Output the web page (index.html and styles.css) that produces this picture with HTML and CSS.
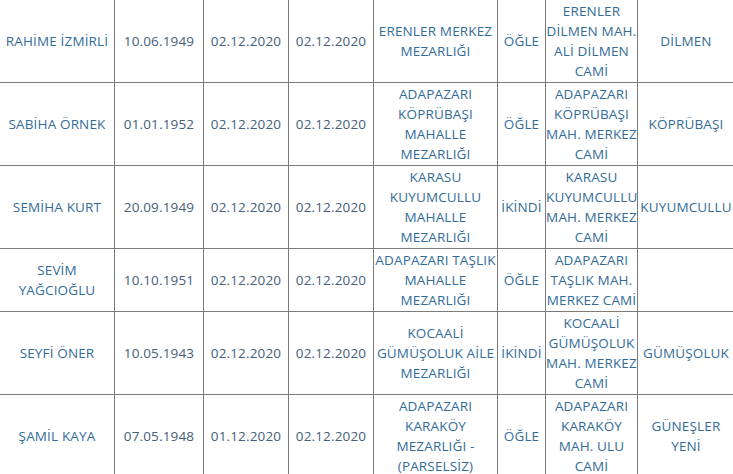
FILE: index.html
```html
<!DOCTYPE html>
<html lang="tr">
<head>
<meta charset="utf-8">
<link rel="stylesheet" href="styles.css">
</head>
<body>
<table class="list">
<colgroup>
<col class="c1"><col class="c2"><col class="c3"><col class="c4"><col class="c5"><col class="c6"><col class="c7"><col class="c8">
</colgroup>
<tbody>
<tr>
<td class="name">RAHİME İZMİRLİ</td><td class="date">10.06.1949</td><td class="date">02.12.2020</td><td class="date">02.12.2020</td>
<td>ERENLER MERKEZ MEZARLIĞI</td><td>ÖĞLE</td><td>ERENLER DİLMEN MAH. ALİ DİLMEN CAMİ</td><td>DİLMEN</td>
</tr>
<tr>
<td class="name">SABİHA ÖRNEK</td><td class="date">01.01.1952</td><td class="date">02.12.2020</td><td class="date">02.12.2020</td>
<td>ADAPAZARI KÖPRÜBAŞI MAHALLE MEZARLIĞI</td><td>ÖĞLE</td><td>ADAPAZARI KÖPRÜBAŞI MAH. MERKEZ CAMİ</td><td>KÖPRÜBAŞI</td>
</tr>
<tr>
<td class="name">SEMİHA KURT</td><td class="date">20.09.1949</td><td class="date">02.12.2020</td><td class="date">02.12.2020</td>
<td>KARASU KUYUMCULLU MAHALLE MEZARLIĞI</td><td>İKİNDİ</td><td>KARASU KUYUMCULLU MAH. MERKEZ CAMİ</td><td>KUYUMCULLU</td>
</tr>
<tr>
<td class="name">SEVİM YAĞCIOĞLU</td><td class="date">10.10.1951</td><td class="date">02.12.2020</td><td class="date">02.12.2020</td>
<td>ADAPAZARI TAŞLIK MAHALLE MEZARLIĞI</td><td>ÖĞLE</td><td>ADAPAZARI TAŞLIK MAH. MERKEZ CAMİ</td><td></td>
</tr>
<tr>
<td class="name">SEYFİ ÖNER</td><td class="date">10.05.1943</td><td class="date">02.12.2020</td><td class="date">02.12.2020</td>
<td>KOCAALİ GÜMÜŞOLUK AİLE MEZARLIĞI</td><td>İKİNDİ</td><td>KOCAALİ GÜMÜŞOLUK MAH. MERKEZ CAMİ</td><td>GÜMÜŞOLUK</td>
</tr>
<tr>
<td class="name">ŞAMİL KAYA</td><td class="date">07.05.1948</td><td class="date">01.12.2020</td><td class="date">02.12.2020</td>
<td>ADAPAZARI KARAKÖY MEZARLIĞI - (PARSELSİZ)</td><td>ÖĞLE</td><td>ADAPAZARI KARAKÖY MAH. ULU CAMİ</td><td>GÜNEŞLER YENİ</td>
</tr>
</tbody>
</table>
</body>
</html>
```
FILE: styles.css
```css
html, body {
  margin: 0;
  padding: 0;
  background: #ffffff;
  overflow: hidden;
}
.list {
  border-collapse: collapse;
  table-layout: fixed;
  width: 735px;
  margin: -1px 0 0 -1px;
  font-family: "Open Sans", "Liberation Sans", sans-serif;
  font-size: 13.5px;
  letter-spacing: 0.15px;
  line-height: 20px;
  color: #336c98;
}
.list td {
  border: 1px solid #7b7b7b;
  padding: 1px 0;
  text-align: center;
  vertical-align: middle;
}
.list td.date {
  color: #45607a;
}
.c1 { width: 115px; }
.c2 { width: 89px; }
.c3 { width: 85px; }
.c4 { width: 85px; }
.c5 { width: 124px; }
.c6 { width: 48px; }
.c7 { width: 92px; }
.c8 { width: 97px; }
```
